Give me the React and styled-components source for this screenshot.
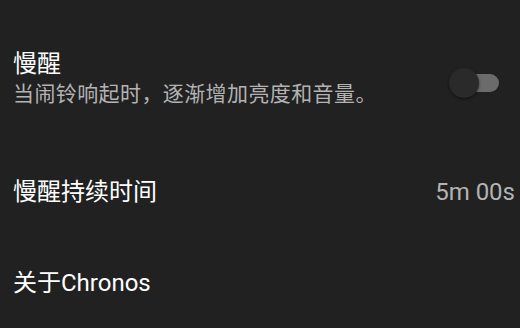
import React, { useState } from "react";
import styled, { createGlobalStyle } from "styled-components";

const GlobalStyle = createGlobalStyle`
  html, body {
    margin: 0;
    padding: 0;
    background: #212121;
  }
  body {
    font-family: Roboto, "Noto Sans CJK SC", sans-serif;
  }
`;

const Page = styled.div`
  width: 520px;
  height: 328px;
  overflow: hidden;
  background: #212121;
  display: flex;
  flex-direction: column;
`;

const Row = styled.div`
  display: flex;
  align-items: center;
  justify-content: space-between;
  padding: ${(p) => p.$pad};
  padding-left: 13px;
  padding-right: 5px;
`;

const TextBlock = styled.div`
  display: flex;
  flex-direction: column;
`;

const Title = styled.span`
  color: #ffffff;
  font-size: 24px;
  line-height: ${(p) => p.$lh || "32px"};
`;

const Summary = styled.span`
  color: #b3b3b3;
  font-size: 21px;
  letter-spacing: 0.4px;
  line-height: 30px;
`;

const Value = styled.span`
  color: #b3b3b3;
  font-size: 24px;
  line-height: 32px;
`;

const Switch = styled.div`
  position: relative;
  width: 50px;
  height: 30px;
  margin-top: 7px;
  margin-right: 16px;
  cursor: pointer;
`;

const Track = styled.div`
  position: absolute;
  left: 6px;
  right: 0;
  top: 6px;
  height: 18px;
  border-radius: 9px;
  background: ${(p) => (p.$on ? "#5c7fa8" : "#6b6b6b")};
`;

const Thumb = styled.div`
  position: absolute;
  top: 0;
  left: ${(p) => (p.$on ? "20px" : "0")};
  width: 30px;
  height: 30px;
  border-radius: 50%;
  background: ${(p) => (p.$on ? "#8ab4f8" : "#2a2a2a")};
  box-shadow: 0 1px 3px rgba(0, 0, 0, 0.5);
`;

export default function App() {
  const [on, setOn] = useState(false);

  return (
    <Page>
      <GlobalStyle />
      <Row $pad="49px 0 0">
        <TextBlock>
          <Title $lh="30px">慢醒</Title>
          <Summary>当闹铃响起时，逐渐增加亮度和音量。</Summary>
        </TextBlock>
        <Switch onClick={() => setOn(!on)}>
          <Track $on={on} />
          <Thumb $on={on} />
        </Switch>
      </Row>
      <Row $pad="67px 0 0">
        <Title>慢醒持续时间</Title>
        <Value>5m 00s</Value>
      </Row>
      <Row $pad="59px 0 0">
        <Title>关于Chronos</Title>
      </Row>
    </Page>
  );
}
